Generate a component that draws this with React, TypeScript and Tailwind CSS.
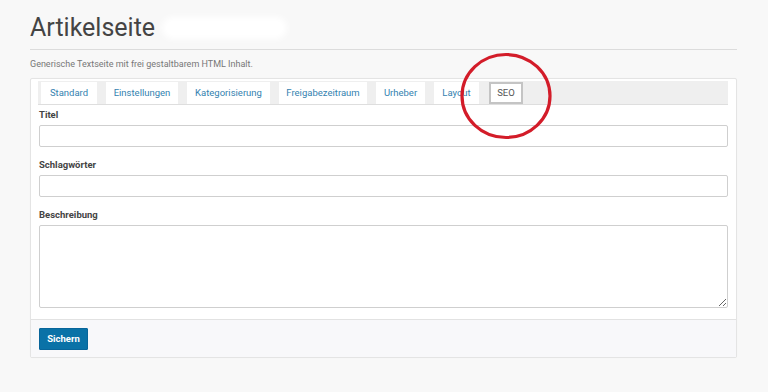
import React from "react";

const tabs = [
  { label: "Standard", w: "w-[56px]" },
  { label: "Einstellungen", w: "w-[72px]" },
  { label: "Kategorisierung", w: "w-[83px]" },
  { label: "Freigabezeitraum", w: "w-[88px]" },
  { label: "Urheber", w: "w-[49px]" },
  { label: "Layout", w: "w-[45px]" },
];

export default function App() {
  return (
    <div className="relative w-[768px] h-[392px] bg-[#f8f8f8] overflow-hidden font-['Roboto',_'Liberation_Sans',_sans-serif]">
      <div className="pl-[30px] pr-[31px] pt-[13px]">
        <div className="flex items-center h-[30px]">
          <h1 className="text-[25px] leading-[30px] font-normal text-[#444]">Artikelseite</h1>
          <span className="ml-[7px] inline-block w-[125px] h-[22px] rounded-full bg-white blur-[3px]" />
        </div>
        <div className="mt-[6px] border-t border-[#dcdcdc]" />
        <p className="mt-[7px] text-[9px] leading-[14px] text-[#777]">
          Generische Textseite mit frei gestaltbarem HTML Inhalt.
        </p>
        <div className="mt-[7px] bg-white border border-[#e4e4e4] rounded-[2px] shadow-[0_0_1px_rgba(0,0,0,0.04)]">
          <div className="px-[8px] pt-[2px]">
            <div className="flex items-end gap-[9px] bg-[#efefef] border-b border-[#dedede] pl-[3px] pt-[1px] h-[24px] -ml-[1px]">
              {tabs.map((t) => (
                <div
                  key={t.label}
                  className={`${t.w} h-[22px] bg-white flex items-center justify-center text-[9.5px] text-[#3482b0]`}
                >
                  {t.label}
                </div>
              ))}
              <div className="w-[34px] h-[22px] bg-white border-2 border-[#c4c4c4] flex items-center justify-center text-[9.5px] text-[#555] ml-[1px]">
                SEO
              </div>
            </div>
            <div className="pt-[3px] pb-[11px]">
              <label className="block text-[9.5px] leading-[13px] font-bold text-[#444]">Titel</label>
              <input className="mt-[4px] block w-full h-[22px] border border-[#cfcfcf] rounded-[2px] bg-white outline-none" />
              <label className="mt-[11px] block text-[9.5px] leading-[13px] font-bold text-[#444]">Schlagwörter</label>
              <input className="mt-[4px] block w-full h-[22px] border border-[#cfcfcf] rounded-[2px] bg-white outline-none" />
              <label className="mt-[11px] block text-[9.5px] leading-[13px] font-bold text-[#444]">Beschreibung</label>
              <textarea className="mt-[4px] block w-full h-[83px] border border-[#cfcfcf] rounded-[2px] bg-white outline-none" />
            </div>
          </div>
          <div className="flex items-start border-t border-[#e2e2e2] bg-[#f8f8fa] px-[8px] pt-[8px] pb-[7px]">
            <button className="block w-[49px] h-[22px] bg-[#0a72a7] border border-[#08659a] text-white text-[9.5px] leading-[20px] font-bold rounded-[1px]">
              Sichern
            </button>
          </div>
        </div>
      </div>
      <svg className="absolute left-[459px] top-[52px]" width="94" height="88" viewBox="0 0 94 88">
        <ellipse cx="47" cy="44" rx="44" ry="41.5" fill="none" stroke="#d31c29" strokeWidth="3.2" />
      </svg>
    </div>
  );
}
